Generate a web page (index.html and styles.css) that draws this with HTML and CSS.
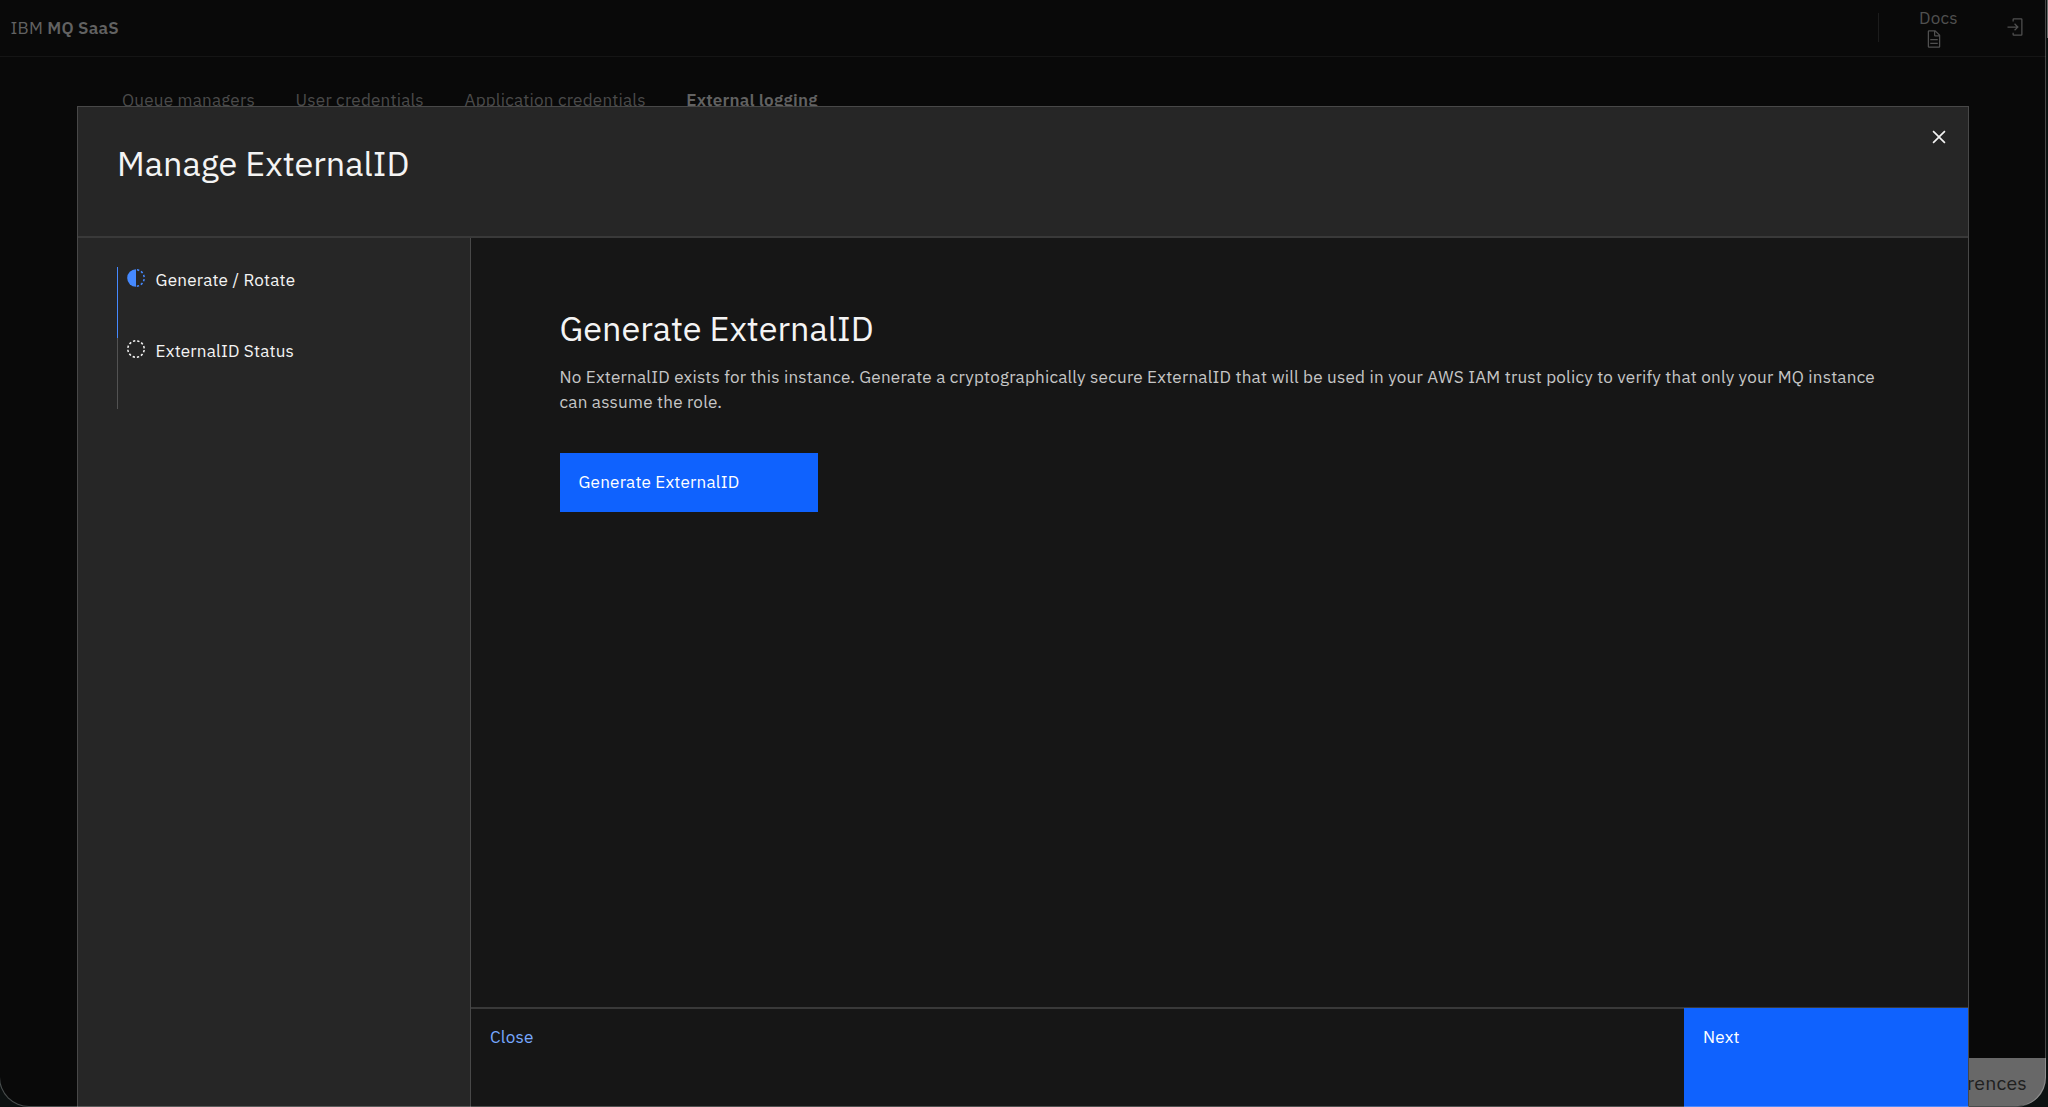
FILE: index.html
```html
<!DOCTYPE html>
<html lang="en">
<head>
  <meta charset="UTF-8" />
  <title>IBM MQ SaaS</title>
  <meta name="viewport" content="width=device-width, initial-scale=1.0" />
  <link rel="stylesheet" href="styles.css">
</head>
<body>
  <div class="window">
    <header class="topbar">
      <div class="brand">IBM <strong>MQ SaaS</strong></div>
      <div class="topbar-actions">
        <span class="divider"></span>
        <a class="docs">
          <span class="docs-label">Docs</span>
          <svg class="docs-icon" viewBox="0 0 32 32"><path d="M25.7 9.3l-7-7A.91.91 0 0018 2H8a2 2 0 00-2 2v24a2 2 0 002 2h16a2 2 0 002-2V10a.91.91 0 00-.3-.7zM18 4.4l5.6 5.6H18zM24 28H8V4h8v6a2 2 0 002 2h6z"/><path d="M10 22h12v2H10zM10 16h12v2H10z"/></svg>
        </a>
        <a class="logout">
          <svg viewBox="0 0 32 32"><path d="M26 30H14a2 2 0 01-2-2v-3h2v3h12V4H14v3h-2V4a2 2 0 012-2h12a2 2 0 012 2v24a2 2 0 01-2 2z"/><path d="M14.59 20.59L18.17 17H4v-2h14.17l-3.58-3.59L16 10l6 6-6 6-1.41-1.41z"/></svg>
        </a>
      </div>
    </header>
    <nav class="tabs">
      <a class="tab">Queue managers</a>
      <a class="tab">User credentials</a>
      <a class="tab">Application credentials</a>
      <a class="tab active">External logging</a>
    </nav>
  </div>

  <button class="preferences">Cookie Preferences</button>

  <section class="modal">
    <div class="modal-header">
      <h2>Manage ExternalID</h2>
      <button class="modal-close" aria-label="Close">
        <svg viewBox="0 0 32 32"><path d="M17.41 16L24 9.41 22.59 8 16 14.59 9.41 8 8 9.41 14.59 16 8 22.59 9.41 24 16 17.41 22.59 24 24 22.59 17.41 16z"/></svg>
      </button>
    </div>
    <div class="modal-body">
      <aside class="sidebar">
        <ul class="steps">
          <li class="step current">
            <svg viewBox="0 0 20 20"><path d="M10 1.2a8.8 8.8 0 000 17.6z"/><path class="dashes" d="M10 1.8a8.2 8.2 0 010 16.4"/></svg>
            <span>Generate / Rotate</span>
          </li>
          <li class="step">
            <svg viewBox="0 0 20 20"><circle class="dashes" cx="10" cy="10" r="8.2"/></svg>
            <span>ExternalID Status</span>
          </li>
        </ul>
      </aside>
      <div class="main">
        <div class="content">
          <h3>Generate ExternalID</h3>
          <p>No ExternalID exists for this instance. Generate a cryptographically secure ExternalID that will be used in your AWS IAM trust policy to verify that only your MQ instance can assume the role.</p>
          <button class="btn-generate">Generate ExternalID</button>
        </div>
        <div class="footer">
          <button class="btn-close">Close</button>
          <button class="btn-next">Next</button>
        </div>
      </div>
    </div>
  </section>
  <div class="window-edge"></div>
  <div class="backdrop-edge"></div>
</body>
</html>
```
FILE: styles.css
```css
* { margin: 0; padding: 0; box-sizing: border-box; }

body {
  height: 100vh;
  overflow: hidden;
  background: #0c1111;
  color: #f4f4f4;
  font-family: "IBM Plex Sans", "Open Sans", "Noto Sans", sans-serif;
  font-size: 17.1px;
  letter-spacing: 0.2px;
}

button {
  border: none;
  font: inherit;
  letter-spacing: inherit;
  text-align: left;
  cursor: pointer;
}

h2, h3 {
  font-weight: 400;
  font-size: 34.2px;
  letter-spacing: 0;
}

.window {
  width: 2046px;
  height: 1106px;
  background: #090909;
  border-radius: 0 0 30px 30px;
}

.topbar {
  display: flex;
  justify-content: space-between;
  height: 57px;
  padding-left: 10.5px;
  border-bottom: 1px solid #151515;
}

.brand {
  line-height: 56px;
  color: #626262;
}

.brand strong { font-weight: 600; }

.topbar-actions {
  display: flex;
  width: 168px;
  padding-top: 7px;
  color: #505050;
  fill: #505050;
}

.divider {
  width: 1px;
  height: 29px;
  margin-top: 6px;
  background: #1c1c1c;
}

.docs {
  width: 126px;
  padding-left: 40px;
}

.docs-label {
  display: block;
  line-height: 22px;
}

.docs-icon { display: block; width: 20px; margin-left: 5px; }
.logout svg { display: block; width: 20px; margin-top: 10px; }

.tabs {
  display: flex;
  gap: 40.6px;
  padding: 30px 0 0 122px;
  color: #4b4b4b;
  line-height: 26px;
}

.tabs .active { color: #626262; font-weight: 600; }

.preferences {
  position: absolute;
  right: 2px;
  bottom: 1px;
  height: 48px;
  padding: 0 19px;
  background: #686868;
  color: #202020;
  font-size: 19.5px;
  border-radius: 0 0 28px 0;
}

.modal {
  position: absolute;
  top: 106px;
  left: 77px;
  display: flex;
  flex-direction: column;
  width: 1892px;
  height: 1001px;
  background: #262626;
  border: 1px solid #484848;
  border-bottom: none;
}

.modal-header {
  display: flex;
  justify-content: space-between;
  height: 131px;
  padding: 32px 14px 0 39px;
  border-bottom: 2px solid #393939;
}

.modal-header h2 { line-height: 48px; }

.modal-close {
  width: 28px;
  height: 28px;
  margin-top: -16px;
  background: none;
  fill: #f4f4f4;
}

.modal-close svg {
  display: block;
  width: 26px;
}

.modal-body { display: flex; flex: 1; }

.sidebar {
  width: 393px;
  padding: 29px 0 0 39px;
  border-right: 1px solid #484848;
}

.steps { list-style: none; }

.step {
  display: flex;
  height: 71px;
  border-left: 1px solid #525252;
  line-height: 25px;
}

.step svg {
  width: 20px;
  height: 20px;
  margin: 1px 9.3px 0 8.3px;
}

.dashes {
  fill: none;
  stroke: #f4f4f4;
  stroke-width: 1.5;
  stroke-dasharray: 2.3 1.993;
  stroke-dashoffset: -1;
}

.step.current { border-color: #4589ff; fill: #4589ff; }
.step.current .dashes { stroke: #4589ff; }

.main {
  display: flex;
  flex: 1;
  flex-direction: column;
  background: #161616;
}

.content {
  flex: 1;
  padding: 66px 88px 0 88.5px;
}

.content h3 { line-height: 48px; }

.content p {
  margin-top: 13px;
  color: #c6c6c6;
  line-height: 24.5px;
  letter-spacing: 0.21px;
}

.btn-generate {
  width: 258px;
  height: 59px;
  margin-top: 39px;
  padding: 0 19px 3px;
  background: #0f62fe;
  color: #fff;
}

.footer {
  display: flex;
  justify-content: space-between;
  height: 100px;
  border-top: 2px solid #393939;
}

.footer button {
  display: flex;
  align-items: flex-start;
  margin-top: -1px;
  padding: 17px 19px 0;
  line-height: 24px;
}

.btn-close { background: none; color: #78a9ff; }
.btn-next { width: 284px; background: #0f62fe; color: #fff; }

/* thin outline that runs over everything at the window border */
.window-edge {
  position: absolute;
  inset: 0 2px 0 -1px;
  border: 1px solid rgba(255, 255, 255, 0.25);
  border-top: none;
  border-radius: 0 0 30px 30px;
  pointer-events: none;
}

.backdrop-edge {
  position: absolute;
  top: 0;
  right: 0;
  width: 1px;
  height: 38px;
  background: #6e6e6e;
}
```
